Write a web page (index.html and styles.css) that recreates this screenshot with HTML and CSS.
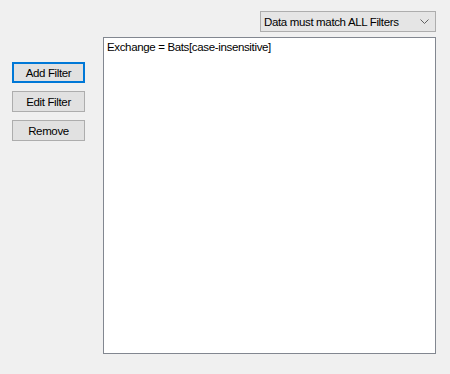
FILE: index.html
```html
<!DOCTYPE html>
<html>
<head>
<meta charset="utf-8">
<link rel="stylesheet" href="styles.css">
</head>
<body>
<div class="page">
  <div class="top">
    <div class="combo">
      <span class="combo-text">Data must match ALL Filters</span>
      <svg class="chev" width="9" height="5" viewBox="0 0 9 5"><path d="M0.5 0.5 L4.5 4.5 L8.5 0.5" fill="none" stroke="#606060" stroke-width="1"/></svg>
    </div>
  </div>
  <div class="main">
    <div class="buttons">
      <button class="btn btn-default">Add Filter</button>
      <button class="btn">Edit Filter</button>
      <button class="btn">Remove</button>
    </div>
    <div class="list">
      <div class="item">Exchange = Bats[case-insensitive]</div>
    </div>
  </div>
</div>
</body>
</html>
```
FILE: styles.css
```css
html, body {
  margin: 0;
  padding: 0;
  background: #f0f0f0;
}
.page {
  width: 450px;
  height: 374px;
  box-sizing: border-box;
  padding: 11px 14px 0 12px;
  font-family: "Liberation Sans", Arial, sans-serif;
  font-size: 11.5px;
  letter-spacing: -0.35px;
  color: #000;
}
.top {
  display: flex;
  justify-content: flex-end;
}
.combo {
  width: 176px;
  height: 21px;
  box-sizing: border-box;
  border: 1px solid #adadad;
  background: #e5e5e5;
  display: flex;
  align-items: center;
  justify-content: space-between;
  padding: 0 5px 0 3px;
}
.chev {
  display: block;
  margin-right: 1px;
}
.main {
  display: flex;
  margin-top: 5px;
}
.buttons {
  display: flex;
  flex-direction: column;
  gap: 8px;
  margin-top: 25px;
  width: 73px;
}
.btn {
  width: 73px;
  height: 21px;
  box-sizing: border-box;
  border: 1px solid #adadad;
  background: #e1e1e1;
  font-family: inherit;
  font-size: inherit;
  letter-spacing: inherit;
  color: #000;
  padding: 0;
  margin: 0;
  border-radius: 0;
}
.btn-default {
  border: 2px solid #0078d7;
}
.list {
  margin-left: 18px;
  width: 333px;
  height: 317px;
  box-sizing: border-box;
  border: 1px solid #828790;
  background: #fff;
  padding: 2px 3px;
}
.item {
  line-height: 14px;
}
```
